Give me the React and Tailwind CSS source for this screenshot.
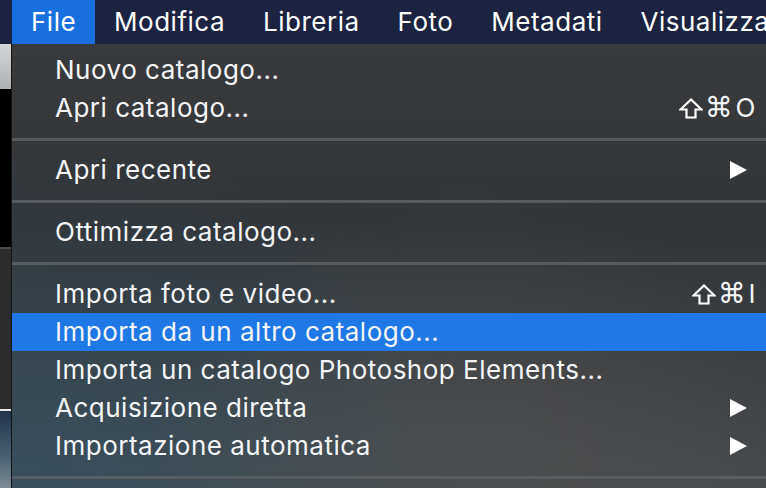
import React from "react";

const font = { fontFamily: 'Inter, "DejaVu Sans", sans-serif' };

function Arrow() {
  return (
    <svg width="19" height="20" viewBox="0 0 19 20" className="block">
      <polygon points="1,1 18,10 1,19" fill="#ffffff" />
    </svg>
  );
}

function Shift() {
  return (
    <svg width="24" height="21" viewBox="0 0 24 21" className="block">
      <path d="M12 1.5 L22.5 11.5 L16.5 11.5 L16.5 19.5 L7.5 19.5 L7.5 11.5 L1.5 11.5 Z" fill="none" stroke="#ffffff" strokeWidth="2.2" strokeLinejoin="miter" />
    </svg>
  );
}

function Item({ label, shortcut, arrow, active }) {
  return (
    <div
      className={
        "h-[38px] flex items-center pl-[43px] pr-[10px] text-[26px] leading-none tracking-[0.5px] text-[#f4f5f6] " +
        (active ? "bg-[#1f78e6]" : "")
      }
    >
      <span className="flex-1 whitespace-nowrap">{label}</span>
      {shortcut && (
        <span className="flex items-center gap-[2px] whitespace-nowrap">
          <Shift />
          <span className="text-[28px]" style={{ fontFamily: '"DejaVu Sans", sans-serif' }}>⌘</span>
          <span className="text-[26px]">{shortcut}</span>
        </span>
      )}
      {arrow && (
        <span className="pr-[8px]">
          <Arrow />
        </span>
      )}
    </div>
  );
}

function Sep() {
  return (
    <div className="pt-[11px] pb-[10px]">
      <div className="h-[3px] bg-[#5b5f63]/90" />
    </div>
  );
}

export default function App() {
  const menus = ["Modifica", "Libreria", "Foto", "Metadati", "Visualizza"];
  return (
    <div className="w-[766px] h-[488px] overflow-hidden flex flex-col bg-[#1b2340]" style={font}>
      <div className="h-[44px] flex items-stretch bg-[#1b2340] text-white text-[26px] tracking-[0.5px] leading-none shrink-0 overflow-hidden">
        <div className="w-[12px] shrink-0" />
        <div className="bg-[#1a6fdf] px-[19px] flex items-center shrink-0">File</div>
        {menus.map((m) => (
          <div key={m} className="px-[19px] flex items-center whitespace-nowrap shrink-0">
            {m}
          </div>
        ))}
      </div>
      <div className="flex-1 flex min-h-0">
        <div className="w-[11px] flex flex-col shrink-0">
          <div className="h-[45px] bg-[linear-gradient(180deg,#d4d6d8,#aeb0b2)]" />
          <div className="h-[112px] bg-black" />
          <div className="h-[1px] bg-black" />
          <div className="h-[45px] bg-black" />
          <div className="h-[2px] bg-[#4a4a4a]" />
          <div className="h-[160px] bg-[#2b2b2b]" />
          <div className="h-[2px] bg-[#e8e8e8]" />
          <div className="flex-1 bg-[linear-gradient(180deg,#23344a,#4a6070_60%,#7f8c95)]" />
        </div>
        <div className="w-[1px] bg-[#141414] shrink-0" />
        <div className="flex-1 relative pt-[7px] bg-[linear-gradient(180deg,#393a3c_0%,#323538_40%,#3b3e41_65%,#474a4d_100%)]">
          <div className="absolute inset-0 bg-[radial-gradient(ellipse_at_0%_100%,rgba(40,85,110,0.45),transparent_55%)] pointer-events-none" />
          <div className="absolute inset-0 bg-[radial-gradient(ellipse_at_60%_100%,rgba(95,88,82,0.35),transparent_50%)] pointer-events-none" />
          <div className="relative">
            <Item label="Nuovo catalogo..." />
            <Item label="Apri catalogo..." shortcut="O" />
            <Sep />
            <Item label="Apri recente" arrow />
            <Sep />
            <Item label="Ottimizza catalogo..." />
            <Sep />
            <Item label="Importa foto e video..." shortcut="I" />
            <Item label="Importa da un altro catalogo..." active />
            <Item label="Importa un catalogo Photoshop Elements..." />
            <Item label="Acquisizione diretta" arrow />
            <Item label="Importazione automatica" arrow />
            <Sep />
          </div>
        </div>
      </div>
    </div>
  );
}
